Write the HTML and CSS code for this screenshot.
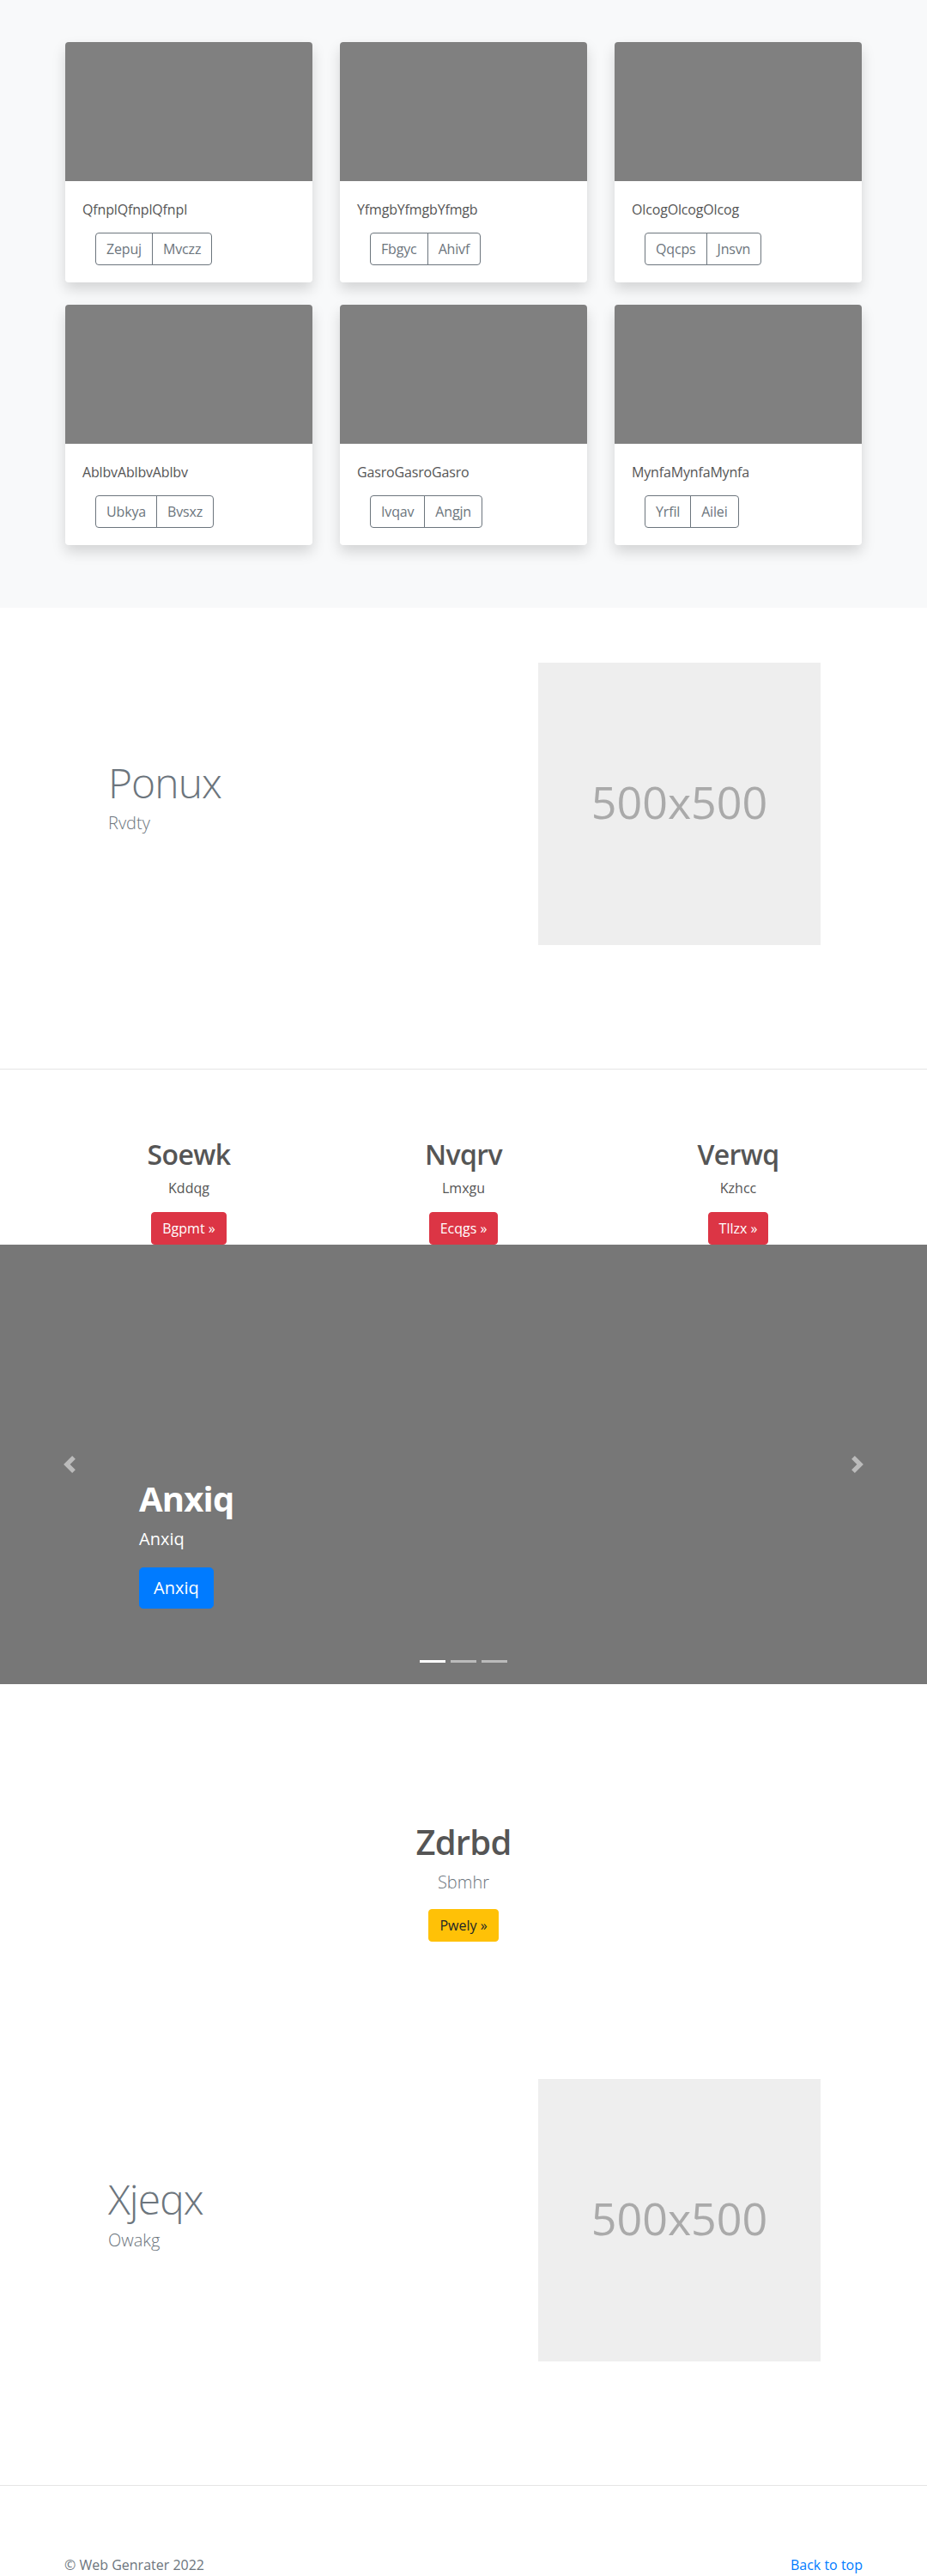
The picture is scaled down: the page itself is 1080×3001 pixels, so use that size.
FILE: index.html
```html
<!DOCTYPE html>
<html lang="en">
<head>
<meta charset="utf-8">
<title>Album</title>
<link rel="stylesheet" href="styles.css">
</head>
<body>
<main>
  <section class="album">
    <div class="container">
      <div class="album-grid">
        <div class="card">
          <div class="card-img"></div>
          <div class="card-body">
            <p class="card-text">QfnplQfnplQfnpl</p>
            <div class="btn-group"><button class="btn-outline">Zepuj</button><button class="btn-outline">Mvczz</button></div>
          </div>
        </div>
        <div class="card">
          <div class="card-img"></div>
          <div class="card-body">
            <p class="card-text">YfmgbYfmgbYfmgb</p>
            <div class="btn-group"><button class="btn-outline">Fbgyc</button><button class="btn-outline">Ahivf</button></div>
          </div>
        </div>
        <div class="card">
          <div class="card-img"></div>
          <div class="card-body">
            <p class="card-text">OlcogOlcogOlcog</p>
            <div class="btn-group"><button class="btn-outline">Qqcps</button><button class="btn-outline">Jnsvn</button></div>
          </div>
        </div>
        <div class="card">
          <div class="card-img"></div>
          <div class="card-body">
            <p class="card-text">AblbvAblbvAblbv</p>
            <div class="btn-group"><button class="btn-outline">Ubkya</button><button class="btn-outline">Bvsxz</button></div>
          </div>
        </div>
        <div class="card">
          <div class="card-img"></div>
          <div class="card-body">
            <p class="card-text">GasroGasroGasro</p>
            <div class="btn-group"><button class="btn-outline">Ivqav</button><button class="btn-outline">Angjn</button></div>
          </div>
        </div>
        <div class="card">
          <div class="card-img"></div>
          <div class="card-body">
            <p class="card-text">MynfaMynfaMynfa</p>
            <div class="btn-group"><button class="btn-outline">Yrfil</button><button class="btn-outline">Ailei</button></div>
          </div>
        </div>
      </div>
    </div>
  </section>

  <section class="feature">
    <div class="container feature-row">
      <div class="feature-text">
        <h2 class="feature-title">Ponux</h2>
        <p class="lead">Rvdty</p>
      </div>
      <div class="placeholder">500x500</div>
    </div>
  </section>

  <hr class="divider">

  <section class="marketing">
    <div class="container marketing-row">
      <div class="marketing-col">
        <h2>Soewk</h2>
        <p>Kddqg</p>
        <button class="btn btn-danger">Bgpmt &raquo;</button>
      </div>
      <div class="marketing-col">
        <h2>Nvqrv</h2>
        <p>Lmxgu</p>
        <button class="btn btn-danger">Ecqgs &raquo;</button>
      </div>
      <div class="marketing-col">
        <h2>Verwq</h2>
        <p>Kzhcc</p>
        <button class="btn btn-danger">Tllzx &raquo;</button>
      </div>
    </div>
  </section>

  <div class="carousel">
    <div class="carousel-caption">
      <h1 class="caption-title">Anxiq</h1>
      <p class="caption-text">Anxiq</p>
      <button class="btn btn-lg btn-primary">Anxiq</button>
    </div>
    <a class="carousel-control prev" href="#" aria-label="Previous">
      <svg width="20" height="20" viewBox="0 0 8 8"><path d="M5.25 0l-4 4 4 4 1.5-1.5L4.25 4l2.5-2.5L5.25 0z"/></svg>
    </a>
    <a class="carousel-control next" href="#" aria-label="Next">
      <svg width="20" height="20" viewBox="0 0 8 8"><path d="M2.75 0l-1.5 1.5L3.75 4l-2.5 2.5L2.75 8l4-4-4-4z"/></svg>
    </a>
    <ol class="carousel-indicators">
      <li class="active"></li>
      <li></li>
      <li></li>
    </ol>
  </div>

  <section class="jumbo">
    <h1 class="jumbo-title">Zdrbd</h1>
    <p class="lead">Sbmhr</p>
    <button class="btn btn-warning">Pwely &raquo;</button>
  </section>

  <section class="feature">
    <div class="container feature-row">
      <div class="feature-text">
        <h2 class="feature-title">Xjeqx</h2>
        <p class="lead">Owakg</p>
      </div>
      <div class="placeholder">500x500</div>
    </div>
  </section>

  <hr class="divider">

  <footer class="container footer">
    <p class="copy">&copy; Web Genrater 2022</p>
    <a class="back" href="#">Back to top</a>
  </footer>
</main>
</body>
</html>
```

FILE: styles.css
```css
* { box-sizing: border-box; }

body {
  margin: 0;
  font-family: "Open Sans", "Segoe UI", "Noto Sans", sans-serif;
  font-size: 16px;
  line-height: 1.5;
  color: #212529;
  background: #fff;
}

.container {
  width: 960px;
  margin: 0 auto;
}

button { font-family: inherit; cursor: pointer; }

/* Album */
.album {
  background: #f8f9fa;
  padding: 49px 0 73px;
}
.album-grid {
  display: grid;
  grid-template-columns: repeat(3, 288px);
  column-gap: 32px;
  row-gap: 26px;
  padding: 0 16px;
}
.card {
  background: #fff;
  border-radius: 4px;
  overflow: hidden;
  box-shadow: 0 8px 16px rgba(0, 0, 0, 0.15);
}
.card-img {
  height: 162px;
  background: #808080;
}
.card-body {
  padding: 21px 20px 20px;
}
.card-text {
  margin: 0 0 15px;
  color: #555;
  letter-spacing: -0.01em;
}
.btn-group {
  display: inline-flex;
  margin-left: 15px;
}
.btn-outline {
  background: transparent;
  border: 1px solid #6c757d;
  color: #6c757d;
  font-size: 16px;
  line-height: 24px;
  padding: 6px 12px;
  border-radius: 0;
  letter-spacing: -0.01em;
}
.btn-outline + .btn-outline { margin-left: -1px; }
.btn-outline:first-child { border-radius: 4px 0 0 4px; }
.btn-outline:last-child { border-radius: 0 4px 4px 0; }

/* Feature */
.feature {
  padding: 64px 0 144px;
}
.feature-row {
  display: flex;
  align-items: center;
}
.feature-text {
  flex: 1;
  padding-left: 66px;
}
.feature-title {
  font-size: 48px;
  font-weight: 300;
  line-height: 1.2;
  margin: 0 0 4px;
  color: #6c757d;
  letter-spacing: -0.02em;
}
.lead {
  font-size: 20px;
  font-weight: 300;
  line-height: 1.5;
  margin: 0 0 16px;
  color: #6c757d;
}
.placeholder {
  width: 329px;
  height: 329px;
  margin-right: 64px;
  padding-bottom: 6px;
  background: #eee;
  color: #aaa;
  display: flex;
  align-items: center;
  justify-content: center;
  font-size: 52px;
}

.divider {
  border: 0;
  border-top: 1px solid #e5e5e5;
  margin: 0;
}

/* Marketing */
.marketing {
  padding-top: 80px;
}
.marketing-row {
  display: grid;
  grid-template-columns: repeat(3, 1fr);
  text-align: center;
}
.marketing-col h2 {
  font-size: 32px;
  font-weight: 600;
  line-height: 1.2;
  margin: 0 0 8px;
  color: #555;
  letter-spacing: -0.02em;
}
.marketing-col p {
  margin: 0 0 16px;
  color: #555;
}
.btn {
  display: inline-block;
  font-size: 16px;
  line-height: 24px;
  padding: 6px 12px;
  border-radius: 4px;
  vertical-align: top;
}
.btn-danger {
  background: #dc3545;
  border: 1px solid #dc3545;
  color: #fff;
}
.btn-warning {
  background: #ffc107;
  border: 1px solid #ffc107;
  color: #212529;
}
.btn-lg {
  font-size: 20px;
  line-height: 30px;
  padding: 8px 16px;
  border-radius: 4.8px;
}
.btn-primary {
  background: #007bff;
  border: 1px solid #007bff;
  color: #fff;
}

/* Carousel */
.carousel {
  position: relative;
  height: 512px;
  background: #777;
}
.carousel-caption {
  position: absolute;
  left: 162px;
  top: 272px;
  color: #fff;
  z-index: 2;
}
.caption-title {
  font-size: 40px;
  font-weight: 700;
  line-height: 1.2;
  margin: 0 0 8px;
  letter-spacing: -0.02em;
}
.caption-text {
  font-size: 20px;
  line-height: 1.5;
  margin: 0 0 18px;
}
.carousel-control {
  position: absolute;
  top: 0;
  bottom: 0;
  width: 162px;
  display: flex;
  align-items: center;
  justify-content: center;
}
.carousel-control.prev { left: 0; }
.carousel-control.next { right: 0; }
.carousel-control svg {
  fill: #fff;
  opacity: 0.5;
}
.carousel-indicators {
  position: absolute;
  left: 0;
  right: 0;
  bottom: 25px;
  display: flex;
  justify-content: center;
  gap: 6px;
  list-style: none;
  margin: 0;
  padding: 0;
}
.carousel-indicators li {
  width: 30px;
  height: 3px;
  background: rgba(255, 255, 255, 0.5);
}
.carousel-indicators li.active {
  background: #fff;
}

/* Jumbo */
.jumbo {
  padding: 160px 0 96px;
  text-align: center;
}
.jumbo-title {
  font-size: 40px;
  font-weight: 600;
  line-height: 1.2;
  margin: 0 0 8px;
  color: #555;
  letter-spacing: -0.02em;
}

/* Footer */
.footer {
  display: flex;
  justify-content: space-between;
  padding: 80px 15px 16px;
  color: #6c757d;
}
.copy { margin: 0; }
.back {
  color: #007bff;
  text-decoration: none;
}
```
